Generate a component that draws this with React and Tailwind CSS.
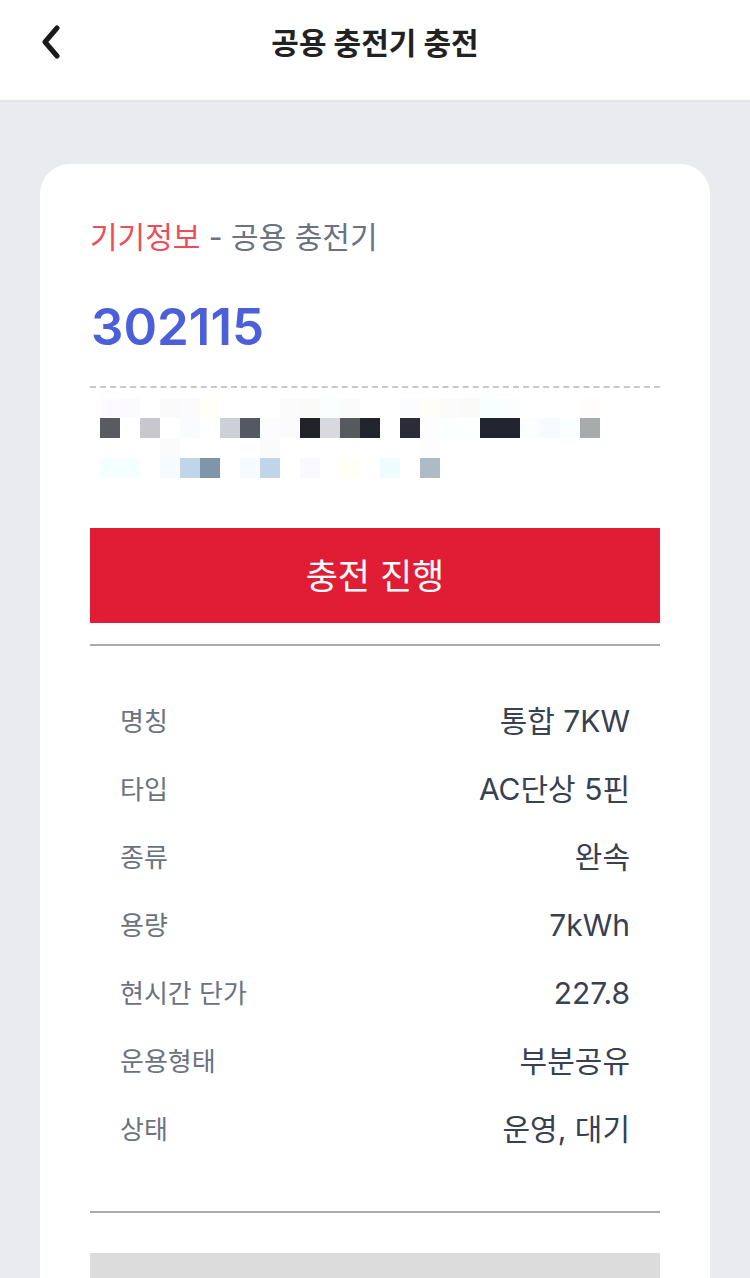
import React from 'react';

const FONT = { fontFamily: 'Inter, "Noto Sans CJK KR", sans-serif' };

// 모자이크 처리된 주소 영역 (20px 블록)
const mosaic = [
  ['#fdfbff', '#fbfbfd', null, '#fafafa', '#fbfbfd', '#fffff8', null, null, null, '#fbfbfb', '#fafaf8', '#fbfefe', '#fbfbfb', null, null, '#fbfcff', '#fffdf8', '#fbfbfb', '#f9f9f7', '#f8ffff', '#fbfdff', null, null, null, '#fffdfb'],
  ['#5a5a62', null, '#c8c8cc', null, '#fafbff', null, '#cdd0d6', '#545860', '#fcfcff', '#fbfbfb', '#222328', '#d9d8df', '#565a5d', '#22252c', null, '#2c2c36', '#fdfdfd', '#fbfffe', '#fdfffe', '#22252f', '#22252f', '#fcfdff', '#f7fbff', '#fbfeff', '#a8abac'],
  [null, null, null, '#fbfbfb', null, null, null, null, '#fbfbfb', null, null, null, null, null, null, null, '#fdfdfd', null, null, null, null, null, null, null, null],
  ['#f4ffff', '#f4ffff', null, '#f6fbff', '#c0d5ea', '#7f95a8', null, '#f6fbff', '#c0d5ea', null, '#faf9ff', null, '#fffff6', null, '#eefcff', null, '#afbac7', null, null, null, null, null, null, null, null],
];

const specs = [
  ['명칭', '통합 7KW'],
  ['타입', 'AC단상 5핀'],
  ['종류', '완속'],
  ['용량', '7kWh'],
  ['현시간 단가', '227.8'],
  ['운용형태', '부분공유'],
  ['상태', '운영, 대기'],
];

export default function App() {
  return (
    <div className="min-h-[1278px] bg-[#e9ebee]" style={FONT}>
      {/* 헤더 */}
      <div className="relative h-[102px] bg-white border-b-2 border-[#e3e5e8] flex items-start justify-center">
        <button className="absolute left-[36px] top-[24px] w-[30px] h-[36px] flex items-center justify-center">
          <svg width="26" height="34" viewBox="0 0 26 34" fill="none">
            <path d="M19 3 L7 17 L19 31" stroke="#1a1a1a" strokeWidth="5" strokeLinecap="round" strokeLinejoin="round" />
          </svg>
        </button>
        <h1 className="mt-[23px] text-[30px] leading-[40px] font-bold text-[#222]">공용 충전기 충전</h1>
      </div>

      {/* 카드 */}
      <div className="mx-[40px] mt-[62px] bg-white rounded-t-[30px] px-[50px] pt-[52px] pb-[40px]">
        <div className="text-[30px] leading-[42px]">
          <span className="text-[#ef4b58]">기기정보</span>
          <span className="text-[#6b7280]"> - 공용 충전기</span>
        </div>

        <div className="mt-[46px] text-[51px] leading-[46px] font-semibold text-[#4a5fd8] pl-[1px]">302115</div>

        <div className="mt-[36px] border-t-2 border-dashed border-[#c8c8c8]" />

        <div className="mt-[10px] pl-[10px] flex flex-col">
          {mosaic.map((row, r) => (
            <div key={r} className="flex h-[20px]">
              {row.map((c, i) => (
                <div key={i} className="w-[20px] h-[20px]" style={{ backgroundColor: c || 'transparent' }} />
              ))}
            </div>
          ))}
        </div>

        <button className="mt-[50px] w-full h-[95px] bg-[#e11d36] text-white text-[35px] leading-[44px] flex items-center justify-center">
          충전 진행
        </button>

        <div className="mt-[21px] h-[2px] bg-[#aaaaaa]" />

        <div className="pt-[41px] px-[30px]">
          {specs.map(([k, v]) => (
            <div key={k} className="h-[68px] flex items-center justify-between">
              <span className="text-[26px] text-[#6b7280]">{k}</span>
              <span className="text-[30px] text-[#374151]">{v}</span>
            </div>
          ))}
        </div>

        <div className="mt-[48px] h-[2px] bg-[#aaaaaa]" />

        <div className="mt-[40px] h-[95px] bg-[#dcdcdc]" />
      </div>
    </div>
  );
}
